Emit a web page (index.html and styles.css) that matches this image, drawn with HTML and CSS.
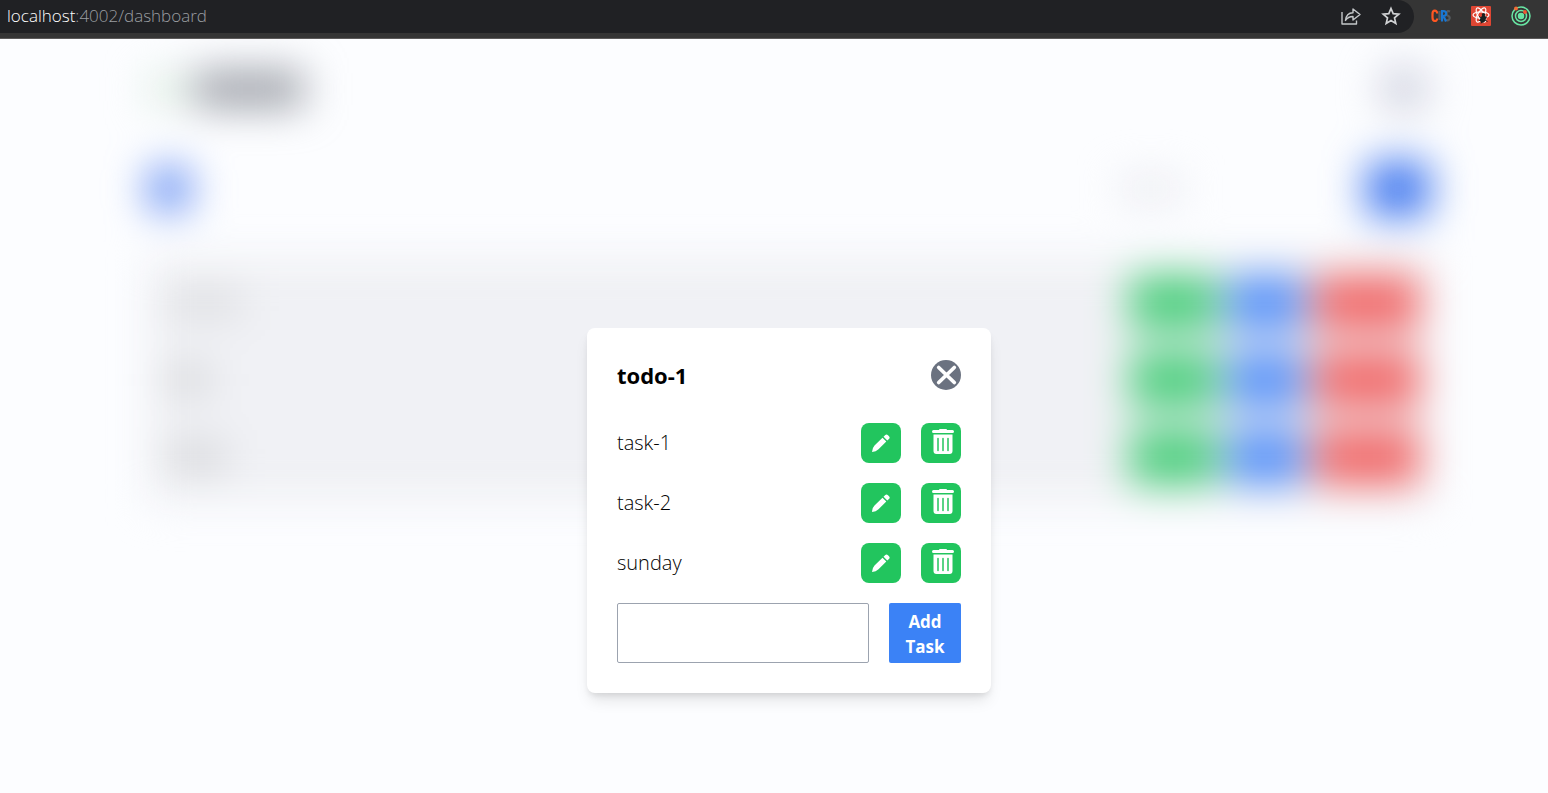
FILE: index.html
```html
<!DOCTYPE html>
<html lang="en">
<head>
<meta charset="utf-8">
<title>Dashboard</title>
<link rel="stylesheet" href="styles.css">
</head>
<body>
<svg class="defs" aria-hidden="true">
  <symbol id="pencil" viewBox="0 0 20 20">
    <path fill="currentColor" d="M1 19Q1.200 15 3.500 12.500L11.500 4.800 15.300 8.600 7.500 16.300Q5 18.700 1 19ZM12.500 3.800 14.300 2.100Q15.500 1 17 2.300L18.200 3.500Q19.200 4.700 18.200 5.800L16.300 7.600Z"/>
  </symbol>
  <symbol id="trash" viewBox="0 0 24 26">
    <path fill="currentColor" d="M8 1Q8 0 9 0H15Q16 0 16 1H21.500Q23 1 23 2.500T21.500 4H2.500Q1 4 1 2.500T2.500 1ZM2.500 5.500H21.500V22Q21.500 25 18.500 25H5.500Q2.500 25 2.500 22Z"/>
    <path stroke="#22c55e" stroke-width="1.500" stroke-linecap="round" d="M7 9.500V21.500M12 9.500V21.500M17 9.500V21.500"/>
  </symbol>
</svg>
<header class="browser">
  <div class="address">
    <span class="url"><span class="host">localhost</span>:4002/dashboard</span>
    <button class="tool" aria-label="Share">
      <svg width="20" height="20" viewBox="0 0 20 20" fill="none" stroke="#c4c7c9" stroke-width="1.400" stroke-linejoin="round"><path d="M1 6V18H15.500V14.500M4.500 14.500C5 9.500 7.500 6.800 12 6.700V3L19 8.500 12 14V10.500C8.500 10.500 6.200 11.700 4.500 14.500Z"/></svg>
    </button>
    <button class="tool" aria-label="Bookmark">
      <svg width="20" height="20" viewBox="0 0 20 20" fill="none" stroke="#d0d2d4" stroke-width="1.700"><path d="M10 2.500 12.200 7.700 17.800 8.200 13.500 11.900 14.800 17.400 10 14.500 5.200 17.400 6.500 11.900 2.200 8.200 7.800 7.700Z"/></svg>
    </button>
  </div>
  <div class="extensions">
    <button class="tool" aria-label="CORS extension">
      <svg width="20" height="20" viewBox="0 0 20 20" fill="none" stroke-width="2.200"><path stroke="#565a5e" d="M8.500 5V14M19 5.500C15.500 3.500 14.500 8.500 17 9.700 20 11 18.500 15.500 15 14"/><path stroke="#ff5722" d="M6.200 7.500C6 3.500 1.500 3.500 1.500 8V11.500C1.500 16 6 16 6.200 12.500"/><path stroke="#1976d2" d="M11 15.500V5.200H12.500C16 5.200 16 10 12.500 10H11M12.500 10 15 15.500"/></svg>
    </button>
    <button class="tool" aria-label="React developer tools">
      <svg width="20" height="20" viewBox="0 0 20 20" fill="none"><rect width="20" height="20" rx="1" fill="#df4633"/><g stroke="#fff" stroke-width="1.200"><ellipse cx="10" cy="9" rx="8" ry="3.200"/><ellipse cx="10" cy="9" rx="8" ry="3.200" transform="rotate(60 10 9)"/><ellipse cx="10" cy="9" rx="8" ry="3.200" transform="rotate(120 10 9)"/></g><ellipse cx="12" cy="13" rx="2.700" ry="3.800" transform="rotate(25 12 13)" fill="#16201f"/><circle cx="12.500" cy="8.700" r="1.700" fill="#16201f"/><path stroke="#16201f" d="M8 10.500 16.500 15.500M8 14.500 16 11M10 17.500 12 13"/></svg>
    </button>
    <button class="tool" aria-label="Orbit extension">
      <svg width="20" height="20" viewBox="0 0 20 20" fill="none" stroke="#68e5a3" stroke-width="1.500"><circle cx="10" cy="10" r="9"/><circle cx="10" cy="10" r="5.500"/><circle cx="10" cy="10" r="2.500" fill="#68e5a3"/><circle cx="5" cy="2.500" r="2" fill="#f36a36" stroke="none"/><circle cx="14" cy="6" r="1.900" fill="#f3542f" stroke="none"/></svg>
    </button>
  </div>
</header>
<main class="stage">
  <div class="page" aria-hidden="true">
    <div class="bar">
      <div class="brand"><span class="leaf"></span><span class="wordmark"></span></div>
      <span class="avatar"></span>
    </div>
    <div class="bar controls">
      <span class="add"></span>
      <div class="search"><span class="hint"></span><span class="go"></span></div>
    </div>
    <div class="list">
      <div class="entry"><span class="name long"></span><span class="pill green"></span><span class="pill blue"></span><span class="pill red"></span></div>
      <div class="entry"><span class="name short"></span><span class="pill green"></span><span class="pill blue"></span><span class="pill red"></span></div>
      <div class="entry"><span class="name"></span><span class="pill green"></span><span class="pill blue"></span><span class="pill red"></span></div>
    </div>
  </div>
  <div class="overlay">
    <section class="modal" role="dialog" aria-labelledby="title">
      <div class="head">
        <h1 id="title">todo-1</h1>
        <button class="close" aria-label="Close"><svg width="30" height="30" viewBox="0 0 30 30"><circle cx="15" cy="15" r="15" fill="#6b7280"/><path d="M7.700 7.500 23.300 22.500M23.300 7.500 7.700 22.500" stroke="#fff" stroke-width="3.700" stroke-linecap="round"/></svg></button>
      </div>
      <ul class="tasks">
        <li><span class="task">task-1</span><button class="icon" aria-label="Edit task-1"><svg width="20" height="20"><use href="#pencil"/></svg></button><button class="icon trash" aria-label="Delete task-1"><svg width="24" height="26"><use href="#trash"/></svg></button></li>
        <li><span class="task">task-2</span><button class="icon" aria-label="Edit task-2"><svg width="20" height="20"><use href="#pencil"/></svg></button><button class="icon trash" aria-label="Delete task-2"><svg width="24" height="26"><use href="#trash"/></svg></button></li>
        <li><span class="task">sunday</span><button class="icon" aria-label="Edit sunday"><svg width="20" height="20"><use href="#pencil"/></svg></button><button class="icon trash" aria-label="Delete sunday"><svg width="24" height="26"><use href="#trash"/></svg></button></li>
      </ul>
      <form class="new">
        <input type="text" aria-label="New task">
        <button type="button">Add Task</button>
      </form>
    </section>
  </div>
</main>
</body>
</html>
```
FILE: styles.css
```css
* { box-sizing: border-box; }
body {
  margin: 0;
  min-height: 100vh;
  display: flex;
  flex-direction: column;
  font-family: "Segoe UI", "Open Sans", "Noto Sans", sans-serif;
  color: #000;
}
button { font: inherit; border: 0; padding: 0; background: none; }
svg { display: block; }
.defs { position: absolute; width: 0; height: 0; }

.browser {
  display: flex;
  align-items: flex-start;
  height: 39px;
  background: #353535;
  border-bottom: 1px solid #5c5a5a;
}
.address {
  flex: 1;
  display: flex;
  align-items: center;
  gap: 20px;
  height: 33px;
  padding: 0 13px 2px 7px;
  background: #202124;
  border-radius: 0 17px 17px 0;
}
.url { flex: 1; font-size: 17px; line-height: 24px; font-weight: 300; color: #9a9da1; }
.host { color: #fff; }
.extensions {
  display: flex;
  align-items: center;
  gap: 20px;
  height: 31px;
  padding: 0 17px;
}

.stage { flex: 1; display: grid; overflow: hidden; background: #fcfdff; }
.page, .overlay { grid-area: 1 / 1; }
.page { padding: 26px 118px 0 148px; filter: blur(20px); }
.bar { display: flex; align-items: center; justify-content: space-between; height: 48px; }
.brand { display: flex; align-items: center; gap: 10px; }
.leaf { width: 36px; height: 32px; background: #deeee2; }
.wordmark { width: 110px; height: 36px; background: #9a9ea6; }
.avatar { width: 48px; height: 48px; margin-right: 2px; border-radius: 24px; background: #cfd1df; }
.controls { margin-top: 52px; }
.add { width: 42px; height: 44px; border-radius: 8px; background: #6a92f3; }
.search { display: flex; align-items: center; gap: 184px; }
.hint { width: 62px; height: 24px; background: #e9eaef; }
.go { width: 64px; height: 56px; border-radius: 8px; background: #4379ef; }
.list {
  margin-top: 44px;
  padding: 18px 10px;
  display: grid;
  gap: 21px;
  background: #f0f1f5;
}
.entry { display: flex; align-items: center; gap: 10px; height: 56px; }
.name { width: 60px; height: 28px; margin: 0 auto 0 8px; background: #d4d5d8; }
.long { width: 76px; background: #dcdde0; }
.short { width: 44px; }
.pill { height: 56px; border-radius: 4px; }
.green { width: 88px; background: #50cf80; }
.blue { width: 76px; background: #5c94f8; }
.red { width: 106px; background: #f16b6b; }

.overlay {
  z-index: 1;
  display: flex;
  justify-content: center;
  align-items: flex-start;
  padding: 289px 0 100px 30px;
}
.modal {
  width: 404px;
  padding: 30px;
  border-radius: 8px;
  background: #fff;
  box-shadow: 0 10px 15px -3px rgba(0, 0, 0, .1), 0 4px 6px -2px rgba(0, 0, 0, .1);
}
.head { display: flex; justify-content: space-between; align-items: center; height: 34px; }
h1 { margin: 0; font-size: 22px; line-height: 32px; font-weight: 700; }
.tasks { list-style: none; margin: 31px 0 20px; padding: 0; display: grid; gap: 20px; }
.tasks li { display: flex; align-items: center; gap: 20px; height: 40px; }
.task { flex: 1; font-size: 20px; line-height: 28px; font-weight: 300; }
.icon {
  width: 40px;
  height: 40px;
  display: flex;
  align-items: center;
  justify-content: center;
  border-radius: 8px;
  background: #22c55e;
  color: #fff;
}
.trash { padding: 0 0 3px 4px; }
.new { display: flex; gap: 20px; height: 60px; }
.new input {
  flex: 1;
  min-width: 0;
  padding: 0 10px;
  border: 1px solid #9ca3af;
  border-radius: 2px;
  font: inherit;
  font-size: 18px;
}
.new button {
  width: 72px;
  padding: 1px 14px 0;
  border-radius: 2px;
  background: #3b82f6;
  color: #fff;
  font-size: 17px;
  line-height: 25px;
  font-weight: 700;
}
```
